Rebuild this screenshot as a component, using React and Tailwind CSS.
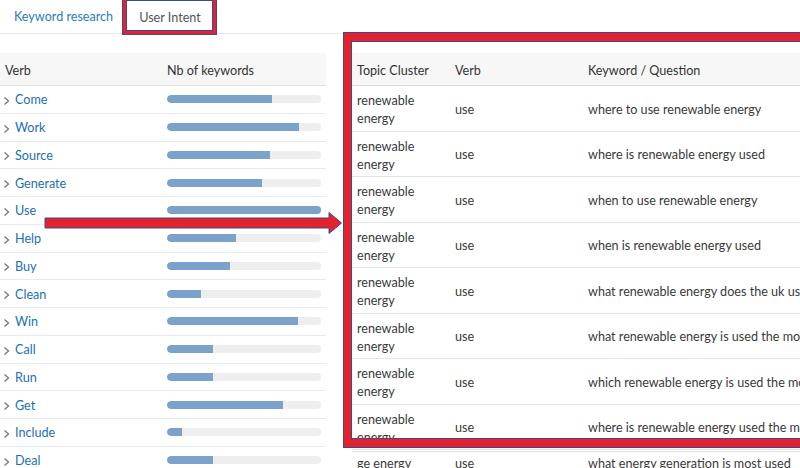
import React from "react";

const verbs = [
  ["Come", 0.68],
  ["Work", 0.86],
  ["Source", 0.67],
  ["Generate", 0.62],
  ["Use", 1.0],
  ["Help", 0.45],
  ["Buy", 0.41],
  ["Clean", 0.22],
  ["Win", 0.85],
  ["Call", 0.3],
  ["Run", 0.3],
  ["Get", 0.75],
  ["Include", 0.1],
  ["Deal", 0.3],
];

const rows = [
  "where to use renewable energy",
  "where is renewable energy used",
  "when to use renewable energy",
  "when is renewable energy used",
  "what renewable energy does the uk use",
  "what renewable energy is used the most",
  "which renewable energy is used the most",
  "where is renewable energy used the most",
];

function Chevron() {
  return (
    <svg width="7" height="10" viewBox="0 0 7 10" className="shrink-0">
      <polyline points="1.5,1.5 5.5,5 1.5,8.5" fill="none" stroke="#777" strokeWidth="1.3" />
    </svg>
  );
}

export default function App() {
  return (
    <div className="relative w-[800px] h-[468px] overflow-hidden bg-white font-['Lato',sans-serif] text-[12.6px]">
      {/* Tabs */}
      <div className="flex h-[34px] items-stretch border-b border-[#e8e8e8]">
        <div className="w-[124px] shrink-0 flex items-center pl-[14px] pt-[2px] text-[#2b7bbf]">Keyword research</div>
        <div className="w-[92px] shrink-0 flex items-center justify-center pt-[2px] bg-white text-[#555] border border-b-0 border-[#dcdcdc]">
          User Intent
        </div>
      </div>

      {/* Content */}
      <div className="flex pt-[19px]">
        {/* Left table */}
        <div className="w-[326px] shrink-0">
          <div className="flex h-[33px] items-center bg-[#f7f7f7] border-b border-[#e2e2e2] text-[#333]">
            <div className="w-[162px] shrink-0 pl-[5px] pt-[4px]">Verb</div>
            <div className="pl-[5px] pt-[4px]">Nb of keywords</div>
          </div>
          {verbs.map(([v, p]) => (
            <div key={v} className="flex h-[27.75px] items-center border-b border-[#e5eaef]">
              <div className="w-[162px] shrink-0 pl-[3px] pt-[3px] flex items-center gap-[5px] text-[#1c6fb5]">
                <Chevron />
                <span>{v}</span>
              </div>
              <div className="pl-[5px]">
                <div className="w-[154px] h-[8px] rounded-[4px] bg-[#eeeeee] overflow-hidden">
                  <div className="h-full rounded-l-[4px] bg-[#7ba3c9]" style={{ width: `${p * 100}%` }} />
                </div>
              </div>
            </div>
          ))}
        </div>

        {/* Right table */}
        <div className="ml-[26px] flex-1 min-w-0 text-[#3a3a3a]">
          <div className="flex h-[33px] items-center bg-[#f7f7f7] border-b border-[#dcdcdc] text-[#333] whitespace-nowrap">
            <div className="w-[98px] shrink-0 pl-[5px] pt-[4px]">Topic Cluster</div>
            <div className="w-[133px] shrink-0 pl-[5px] pt-[4px]">Verb</div>
            <div className="pl-[5px] pt-[4px]">Keyword / Question</div>
          </div>
          {rows.map((k) => (
            <div key={k} className="flex h-[45.5px] items-center border-b border-[#e4e4e4] whitespace-nowrap">
              <div className="w-[98px] shrink-0 pl-[5px] pt-[4px] leading-[18px] whitespace-normal">
                renewable
                <br />
                energy
              </div>
              <div className="w-[133px] shrink-0 pl-[5px] pt-[4px]">use</div>
              <div className="pl-[5px] pt-[4px]">{k}</div>
            </div>
          ))}
          <div className="flex h-[26px] items-center whitespace-nowrap border-t border-[#e4e4e4] mt-[1px]">
            <div className="w-[98px] shrink-0 pl-[5px]">ge energy</div>
            <div className="w-[133px] shrink-0 pl-[5px]">use</div>
            <div className="pl-[5px]">what energy generation is most used</div>
          </div>
        </div>
      </div>

      {/* Annotation: tab highlight */}
      <div className="absolute left-[123px] top-[-3px] w-[93px] h-[37px] border-[3px] border-[#e3232c] outline outline-1 outline-[#3b4a94] shadow-[inset_0_0_0_1px_#3b4a94]" />

      {/* Annotation: table highlight */}
      <div className="absolute left-[344px] top-[33px] w-[480px] h-[414px] border-[8px] border-l-[7px] border-[#e3232c] outline outline-1 outline-[#3b4a94] shadow-[inset_0_0_0_1px_#3b4a94]" />

      {/* Annotation: arrow */}
      <svg className="absolute left-0 top-0" width="360" height="250" viewBox="0 0 360 250">
        <polygon
          points="45,218 329,218 329,212.5 341.5,223 329,233.5 329,228 45,228"
          fill="#e3232c"
          stroke="#3b4a94"
          strokeWidth="1"
        />
      </svg>
    </div>
  );
}
